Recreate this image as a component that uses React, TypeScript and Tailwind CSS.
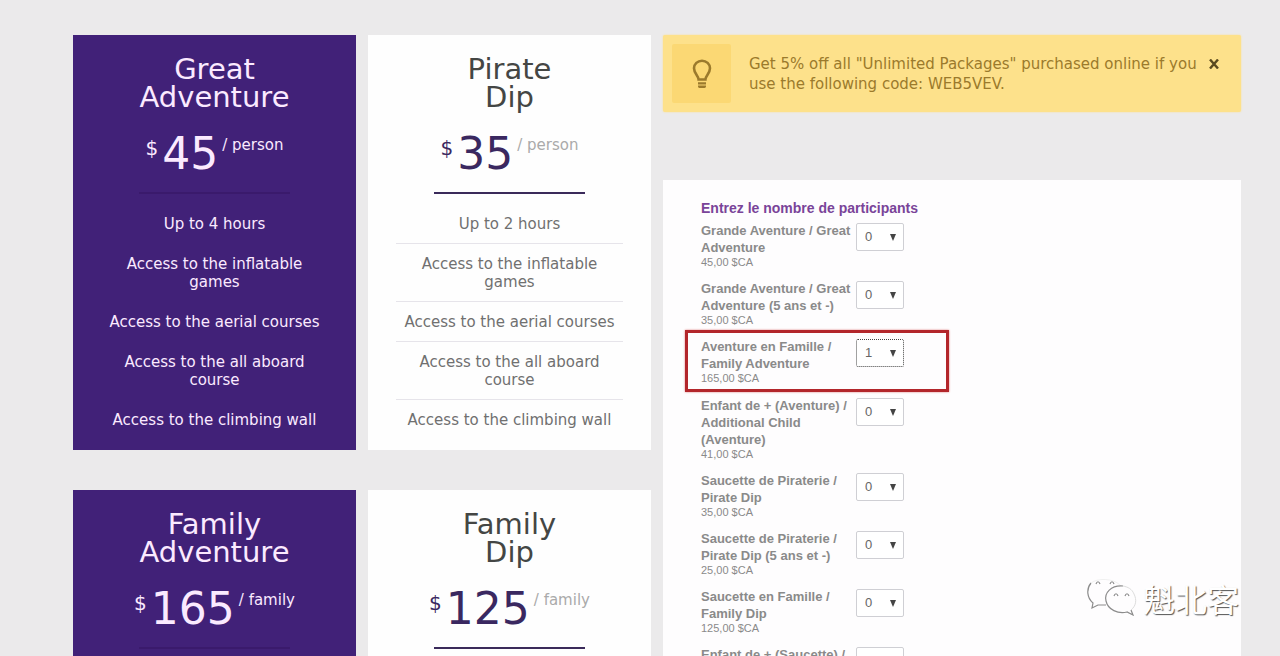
import { useState } from 'react';

interface Plan {
  name: [string, string];
  price: number;
  unit: string;
  featured?: boolean;
  features: string[];
}

interface Ticket {
  id: string;
  label: string;
  price: string;
  quantity: number;
  highlighted?: boolean;
}

const COMMON_FEATURES = [
  'Access to the inflatable games',
  'Access to the aerial courses',
  'Access to the all aboard course',
  'Access to the climbing wall',
];

const PLANS: Plan[] = [
  {
    name: ['Great', 'Adventure'],
    price: 45,
    unit: 'person',
    featured: true,
    features: ['Up to 4 hours', ...COMMON_FEATURES],
  },
  {
    name: ['Pirate', 'Dip'],
    price: 35,
    unit: 'person',
    features: ['Up to 2 hours', ...COMMON_FEATURES],
  },
  {
    name: ['Family', 'Adventure'],
    price: 165,
    unit: 'family',
    featured: true,
    features: ['Up to 4 hours', ...COMMON_FEATURES],
  },
  {
    name: ['Family', 'Dip'],
    price: 125,
    unit: 'family',
    features: ['Up to 2 hours', ...COMMON_FEATURES],
  },
];

const TICKETS: Ticket[] = [
  { id: 'great', label: 'Grande Aventure / Great Adventure', price: '45,00 $CA', quantity: 0 },
  {
    id: 'great-kids',
    label: 'Grande Aventure / Great Adventure (5 ans et -)',
    price: '35,00 $CA',
    quantity: 0,
  },
  {
    id: 'family',
    label: 'Aventure en Famille / Family Adventure',
    price: '165,00 $CA',
    quantity: 1,
    highlighted: true,
  },
  {
    id: 'extra-child',
    label: 'Enfant de + (Aventure) / Additional Child (Aventure)',
    price: '41,00 $CA',
    quantity: 0,
  },
  { id: 'dip', label: 'Saucette de Piraterie / Pirate Dip', price: '35,00 $CA', quantity: 0 },
  {
    id: 'dip-kids',
    label: 'Saucette de Piraterie / Pirate Dip (5 ans et -)',
    price: '25,00 $CA',
    quantity: 0,
  },
  { id: 'family-dip', label: 'Saucette en Famille / Family Dip', price: '125,00 $CA', quantity: 0 },
  {
    id: 'extra-child-dip',
    label: 'Enfant de + (Saucette) / Additional Child (Saucette)',
    price: '31,00 $CA',
    quantity: 0,
  },
];

function PlanCard({ plan }: { plan: Plan }) {
  const { featured } = plan;

  return (
    <section
      className={
        featured
          ? 'bg-[#412178] px-7 pt-5 pb-2.5 text-center text-[#fbeaff]'
          : 'bg-[#fefefe] px-7 pt-5 pb-2.5 text-center text-[#707070]'
      }
    >
      <h2 className={featured ? 'text-[29px] leading-7' : 'text-[29px] leading-7 text-[#444644]'}>
        {plan.name[0]}
        <br />
        {plan.name[1]}
      </h2>
      <p
        className={
          featured
            ? 'mt-[18px] flex items-start justify-center'
            : 'mt-[18px] flex items-start justify-center text-[#3a2860]'
        }
      >
        <span className="mt-[7px] mr-1 text-xl leading-6">$</span>
        <span className="text-[44px] leading-[50px]">{plan.price}</span>
        <span
          className={
            featured
              ? 'mt-[7px] ml-1 text-[15px] leading-[18px]'
              : 'mt-[7px] ml-1 text-[15px] leading-[18px] text-[#aaaaaa]'
          }
        >
          / {plan.unit}
        </span>
      </p>
      <hr
        className={
          featured
            ? 'mx-auto mt-[13px] mb-2.5 w-[151px] border-t-2 border-[#3a1a6c]'
            : 'mx-auto mt-[13px] mb-2.5 w-[151px] border-t-2 border-[#3a2a5a]'
        }
      />
      <ul className="text-[15px] leading-[18px]">
        {plan.features.map((feature) => (
          <li
            key={feature}
            className={
              featured
                ? 'border-b border-transparent pt-[11px] pb-2.5'
                : 'border-b border-[#e6e4ea] pt-[11px] pb-2.5 last:border-transparent'
            }
          >
            {feature}
          </li>
        ))}
      </ul>
    </section>
  );
}

function BulbIcon() {
  return (
    <svg viewBox="0 0 20 30" className="h-[30px] w-5" fill="none" aria-hidden="true">
      <path
        d="M6.6 20.5c0-3.6-4.6-6-4.6-11.2a8 7.6 0 0 1 16 0c0 5.2-4.6 7.6-4.6 11.2z"
        stroke="#9b7a2c"
        strokeWidth="2.6"
      />
      <path d="M6 23.2h8v2.4H6zM6 26.6h8v1a1.4 1.4 0 0 1-1.4 1.4H7.4A1.4 1.4 0 0 1 6 27.6z" fill="#9b7a2c" />
    </svg>
  );
}

function PromoAlert({ onClose }: { onClose: () => void }) {
  return (
    <div
      role="alert"
      className="flex items-start rounded-xs bg-[#fde18b] p-[9px] text-[#9b7a2c] shadow-[0_0_2px_#fde18b]"
    >
      <div className="flex size-[59px] shrink-0 items-center justify-center rounded-xs bg-[#fbd874]">
        <BulbIcon />
      </div>
      <p className="ml-[18px] flex-1 pt-2.5 text-[15px] leading-5">
        Get 5% off all "Unlimited Packages" purchased online if you use the following code: WEB5VEV.
      </p>
      <button
        type="button"
        aria-label="Close"
        onClick={onClose}
        className="mt-3 mr-2.5 ml-1 flex size-4 items-center justify-center text-[#5a4a20]"
      >
        <svg viewBox="0 0 10 10" className="size-2.5" aria-hidden="true">
          <path d="M1 .5l8 9M9 .5l-8 9" stroke="currentColor" strokeWidth="2.4" />
        </svg>
      </button>
    </div>
  );
}

function TicketRow({ ticket }: { ticket: Ticket }) {
  const [quantity, setQuantity] = useState(ticket.quantity);

  return (
    <div className={ticket.highlighted ? 'relative flex pb-[13px]' : 'relative flex pb-3'}>
      <label htmlFor={ticket.id} className="w-[155px] pr-1">
        <span className="block text-[13px] leading-[17px] font-bold text-[#8a8a8a]">
          {ticket.label}
        </span>
        <span className="block text-[11px] leading-3 text-[#8a8a8a]">{ticket.price}</span>
      </label>
      <div className="relative mt-px h-7 w-12">
        <select
          id={ticket.id}
          value={quantity}
          onChange={(e) => setQuantity(Number(e.target.value))}
          className={
            ticket.highlighted
              ? 'h-7 w-12 appearance-none rounded-xs border border-dotted border-[#444444] bg-white pl-2 text-[13px] text-[#666666]'
              : 'h-7 w-12 appearance-none rounded-xs border border-[#cfcfd4] bg-white pl-2 text-[13px] text-[#666666]'
          }
        >
          {[0, 1, 2, 3, 4, 5, 6, 7, 8, 9, 10].map((n) => (
            <option key={n} value={n}>
              {n}
            </option>
          ))}
        </select>
        <svg
          viewBox="0 0 6 7"
          className="pointer-events-none absolute top-[11px] right-2 h-[7px] w-1.5"
          aria-hidden="true"
        >
          <path d="M0 0h6L3 7z" fill="#444444" />
        </svg>
      </div>
      {ticket.highlighted && (
        <div className="pointer-events-none absolute -top-2 -left-4 h-[62px] w-[264px] border-3 border-[#b3262b] shadow-[0_0_2px_#e08080]" />
      )}
    </div>
  );
}

function Watermark() {
  return (
    <div className="pointer-events-none absolute right-[41px] bottom-[38px] flex items-center gap-1.5">
      <svg viewBox="0 0 50 38" className="h-[38px] w-[50px]" fill="none" stroke="#8c8c8c" aria-hidden="true">
        <path d="M4 4C-1 10 0 19 6 24l-1 5 6-3h8" strokeWidth="1.2" />
        <path d="M4 4C10-1 26-1 33 6" stroke="#f0f0f0" />
        <path d="M36 7C24 6 17 14 19 22c2 9 12 13 21 11l6 3-2-5" strokeWidth="1.2" />
        <path d="M44 31c5-4 6-10 3-16C45 10 41 8 36 7" stroke="#dddddd" />
        <path d="M9 5c1-3 3-3 4 0M23 5c1-3 3-3 4 0M27 17c1-3 3-3 4 0M38 17c1-3 3-3 4 0" strokeWidth="1.2" />
      </svg>
      <span className="font-['Noto_Sans_CJK_SC',sans-serif] text-[32px] leading-10 text-white [text-shadow:1px_1px_1px_#555555]">
        魁北客
      </span>
    </div>
  );
}

export default function App() {
  const [showPromo, setShowPromo] = useState(true);

  return (
    <main className="relative h-screen overflow-hidden bg-[#ebeaeb] pt-[35px] pr-[39px] pl-[73px] font-['DejaVu_Sans',sans-serif]">
      <div className="grid grid-cols-2 items-start gap-3">
        <div className="grid grid-cols-2 gap-x-3 gap-y-10">
          {PLANS.map((plan) => (
            <PlanCard key={plan.name.join(' ')} plan={plan} />
          ))}
        </div>
        <div>
          {showPromo && <PromoAlert onClose={() => setShowPromo(false)} />}
          <form className="mt-[68px] bg-[#fefdfe] pt-[18px] pb-8 pl-[38px] font-['Liberation_Sans',sans-serif]">
            <h3 className="mb-1 text-sm leading-5 font-bold text-[#7a4499]">
              Entrez le nombre de participants
            </h3>
            {TICKETS.map((ticket) => (
              <TicketRow key={ticket.id} ticket={ticket} />
            ))}
          </form>
        </div>
      </div>
      <Watermark />
    </main>
  );
}
